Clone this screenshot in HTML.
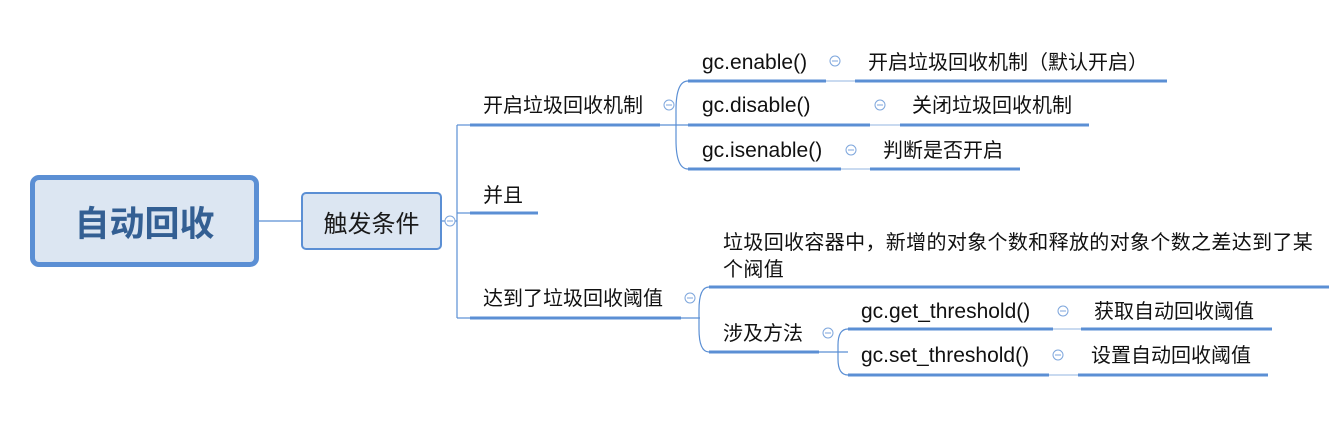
<!DOCTYPE html>
<html><head><meta charset="utf-8"><style>
html,body{margin:0;padding:0;background:#fff;width:1341px;height:433px;overflow:hidden}
body{position:relative;font-family:"Liberation Sans","Noto Sans CJK SC",sans-serif;color:#111}
.t{position:absolute;font-size:20px;line-height:22px;white-space:nowrap}
.g{font-size:21px}
.root{position:absolute;left:30px;top:175px;width:219px;height:82px;border:5px solid #5b8fd4;border-radius:9px;background:#dce6f2;color:#335f93;font-weight:bold;font-size:35px;display:flex;align-items:center;justify-content:center;font-family:"Noto Sans CJK SC",sans-serif}
.c1{position:absolute;left:301px;top:192px;width:137px;height:54px;border:2px solid #5b8fd4;border-radius:5px;background:#dce6f2;font-size:24px;display:flex;align-items:center;justify-content:center;color:#1a1a1a}
</style></head><body>
<svg width="1341" height="433" style="position:absolute;left:0;top:0">
<g stroke="#5b8fd4" fill="none">
<line x1="259" y1="221" x2="301" y2="221" stroke-width="1.2"/>
<path d="M457,125 L457,318" stroke-width="1.2"/>
<line x1="457" y1="125" x2="470" y2="125" stroke-width="1.2"/>
<line x1="457" y1="213" x2="470" y2="213" stroke-width="1.2"/>
<line x1="457" y1="318" x2="470" y2="318" stroke-width="1.2"/>
<line x1="441" y1="221" x2="457" y2="221" stroke-width="1.2"/>
<g stroke-width="3">
<line x1="470" y1="125" x2="660" y2="125"/>
<line x1="470" y1="213" x2="538" y2="213"/>
<line x1="470" y1="318" x2="681" y2="318"/>
<line x1="688" y1="81" x2="826" y2="81"/>
<line x1="855" y1="81" x2="1167" y2="81"/>
<line x1="688" y1="125" x2="870" y2="125"/>
<line x1="900" y1="125" x2="1089" y2="125"/>
<line x1="688" y1="169" x2="841" y2="169"/>
<line x1="870" y1="169" x2="1020" y2="169"/>
<line x1="709" y1="287" x2="1329" y2="287"/>
<line x1="709" y1="352" x2="819" y2="352"/>
<line x1="848" y1="329" x2="1053" y2="329"/>
<line x1="1081" y1="329" x2="1272" y2="329"/>
<line x1="848" y1="375" x2="1049" y2="375"/>
<line x1="1078" y1="375" x2="1268" y2="375"/>
</g>
<g stroke-width="1.2">
<line x1="660" y1="125" x2="688" y2="125"/>
<path d="M688,81 Q676,81 676,110 L676,140 Q676,169 688,169"/>
<line x1="681" y1="318" x2="700" y2="318"/>
<path d="M709,287 Q699,287 699,310 L699,329 Q699,352 709,352"/>
<line x1="819" y1="352" x2="848" y2="352"/>
<path d="M848,329 Q838,329 838,345 L838,359 Q838,375 848,375"/>
</g>
<g stroke="#a9c4e8" stroke-width="1.2">
<line x1="826" y1="81" x2="855" y2="81"/>
<line x1="870" y1="125" x2="900" y2="125"/>
<line x1="841" y1="169" x2="870" y2="169"/>
<line x1="1053" y1="329" x2="1081" y2="329"/>
<line x1="1049" y1="375" x2="1078" y2="375"/>
</g>
</g>
<g stroke="#7ea6dc" fill="#fff" stroke-width="1">
<circle cx="450" cy="221" r="5"/><circle cx="669" cy="105" r="5"/><circle cx="690" cy="298" r="5"/>
<circle cx="835" cy="61" r="5"/><circle cx="880" cy="105" r="5"/><circle cx="851" cy="150" r="5"/>
<circle cx="828" cy="333" r="5"/><circle cx="1063" cy="311" r="5"/><circle cx="1058" cy="355" r="5"/>
</g>
<g stroke="#7ea6dc" stroke-width="1">
<line x1="447" y1="221" x2="453" y2="221"/><line x1="666" y1="105" x2="672" y2="105"/><line x1="687" y1="298" x2="693" y2="298"/>
<line x1="832" y1="61" x2="838" y2="61"/><line x1="877" y1="105" x2="883" y2="105"/><line x1="848" y1="150" x2="854" y2="150"/>
<line x1="825" y1="333" x2="831" y2="333"/><line x1="1060" y1="311" x2="1066" y2="311"/><line x1="1055" y1="355" x2="1061" y2="355"/>
</g>
</svg>
<div class="root">自动回收</div>
<div class="c1">触发条件</div>
<div class="t" style="left:483px;top:95px">开启垃圾回收机制</div>
<div class="t" style="left:483px;top:185px">并且</div>
<div class="t" style="left:483px;top:288px">达到了垃圾回收阈值</div>
<div class="t g" style="left:702px;top:52px">gc.enable()</div>
<div class="t" style="left:868px;top:52px">开启垃圾回收机制（默认开启）</div>
<div class="t g" style="left:702px;top:95px">gc.disable()</div>
<div class="t" style="left:912px;top:95px">关闭垃圾回收机制</div>
<div class="t g" style="left:702px;top:140px">gc.isenable()</div>
<div class="t" style="left:883px;top:140px">判断是否开启</div>
<div class="t" style="left:723px;top:230px;line-height:27px;letter-spacing:0.35px">垃圾回收容器中，新增的对象个数和释放的对象个数之差达到了某<br>个阀值</div>
<div class="t" style="left:723px;top:323px">涉及方法</div>
<div class="t g" style="left:861px;top:301px">gc.get_threshold()</div>
<div class="t" style="left:1094px;top:301px">获取自动回收阈值</div>
<div class="t g" style="left:861px;top:345px">gc.set_threshold()</div>
<div class="t" style="left:1091px;top:345px">设置自动回收阈值</div>
</body></html>
